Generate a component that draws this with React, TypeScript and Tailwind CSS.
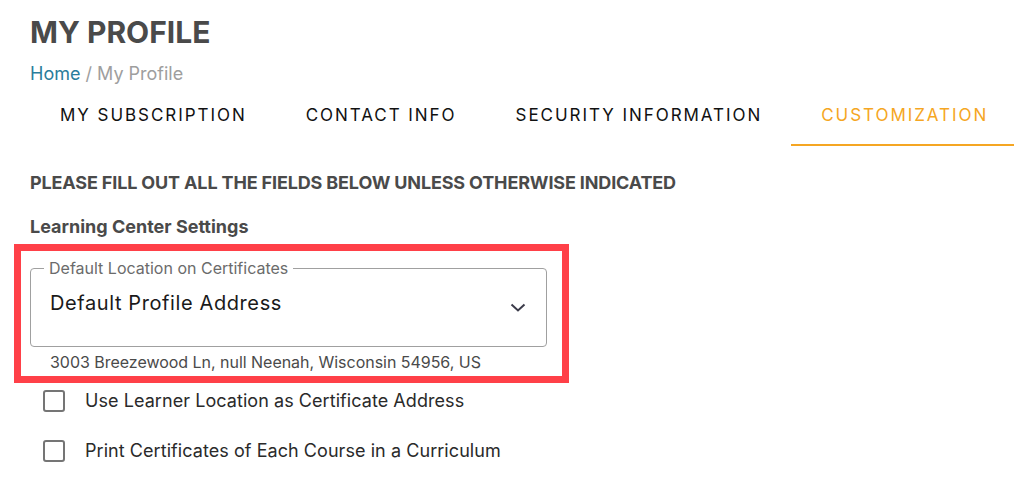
import React from "react";

const tabs = ["MY SUBSCRIPTION", "CONTACT INFO", "SECURITY INFORMATION", "CUSTOMIZATION"];

export default function App() {
  return (
    <div className="w-[1014px] h-[481px] bg-white overflow-hidden" style={{ fontFamily: "Inter, 'Noto Sans', sans-serif" }}>
      <div className="pl-[30px] pt-[14px]">
        <h1 className="text-[30px] leading-[36px] font-bold text-[#4a4a4a]">MY PROFILE</h1>
        <div className="mt-[13px] text-[18px] leading-[22px] text-[#9e9e9e]">
          <span className="text-[#2a7d9c]">Home</span> / My Profile
        </div>
        <div className="flex w-[1100px]">
          {tabs.map((t, i) => (
            <div
              key={t}
              className={
                i === 3
                  ? "shrink-0 whitespace-nowrap pl-[30px] pr-[29px] h-[61px] pt-[19px] text-[17px] leading-[22px] tracking-[1.95px] text-[#f5a623] border-b-2 border-[#f5a623]"
                  : "shrink-0 whitespace-nowrap pl-[30px] pr-[29px] h-[61px] pt-[19px] text-[17px] leading-[22px] tracking-[1.95px] text-[#111111] border-b-2 border-transparent"
              }
            >
              {t}
            </div>
          ))}
        </div>
        <div className="mt-[26px] text-[18px] leading-[22px] font-bold tracking-[-0.15px] text-[#4a4a4a]">
          PLEASE FILL OUT ALL THE FIELDS BELOW UNLESS OTHERWISE INDICATED
        </div>
        <div className="mt-[22px] text-[18px] leading-[22px] font-bold text-[#4a4a4a]">Learning Center Settings</div>
      </div>
      <div className="ml-[14px] mt-[6px] w-[555px] border-[7px] border-[#ff4048] pl-[9px] pr-[15px] pt-[17px] pb-[4px]">
        <div className="relative h-[79px] border border-[#a0a0a0] rounded-[4px]">
          <div className="absolute left-[13px] top-[-11px] bg-white px-[5px] text-[16px] leading-[20px] text-[#6b6b6b]">
            Default Location on Certificates
          </div>
          <div className="pl-[19px] pt-[22px] text-[20px] leading-[24px] text-[#1a1a1a] tracking-[0.6px]">Default Profile Address</div>
          <svg className="absolute left-[479px] top-[34px]" width="16" height="9" viewBox="0 0 16 9">
            <path d="M1.5 1.5 L8 7.5 L14.5 1.5" fill="none" stroke="#3b3b4a" strokeWidth="2" />
          </svg>
        </div>
        <div className="pl-[20px] pt-[5px] text-[16px] leading-[20px] tracking-[-0.03px] text-[#4a4a4a]">
          3003 Breezewood Ln, null Neenah, Wisconsin 54956, US
        </div>
      </div>
      <div className="pl-[43px] mt-[7px] flex flex-col gap-[28px]">
        {["Use Learner Location as Certificate Address", "Print Certificates of Each Course in a Curriculum"].map((l) => (
          <div key={l} className="flex items-center h-[22px]">
            <div className="w-[22px] h-[22px] border-2 border-[#757575] rounded-[3px]" />
            <span className="ml-[20px] text-[18px] leading-[22px] tracking-[0.06px] text-[#2a2a2a]">{l}</span>
          </div>
        ))}
      </div>
    </div>
  );
}
